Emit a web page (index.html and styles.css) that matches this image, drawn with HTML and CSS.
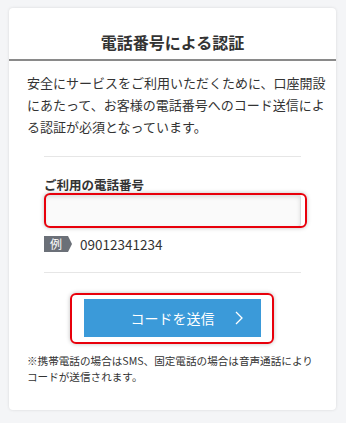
FILE: index.html
```html
<!DOCTYPE html>
<html lang="ja">
<head>
  <meta charset="utf-8">
  <meta name="viewport" content="width=device-width">
  <title>電話番号による認証</title>
  <link rel="stylesheet" href="styles.css">
</head>
<body>
 <div class="card">
  <div class="card-head">
   <h1 class="title">電話番号による認証</h1>
  </div>
  <div class="card-body">
   <p class="intro">安全にサービスをご利用いただくために、口座開設<br>にあたって、お客様の電話番号へのコード送信によ<br>る認証が必須となっています。</p>
   <div class="form">
    <label class="label" for="tel">ご利用の電話番号</label>
    <div class="field">
     <input class="input" id="tel" type="tel">
     <span class="mark mark-input"></span>
    </div>
    <div class="example">
     <span class="badge">例</span>
     <span class="example-num">09012341234</span>
    </div>
   </div>
   <div class="actions">
    <div class="btn-wrap">
     <button class="btn" type="button">コードを送信
      <svg class="chev" width="8" height="14" viewBox="0 0 8 14"><path d="M1 1 L7 7 L1 13" fill="none" stroke="#fff" stroke-width="1.3"/></svg>
     </button>
     <span class="mark mark-btn"></span>
    </div>
   </div>
   <p class="note">※携帯電話の場合はSMS、固定電話の場合は音声通話によりコードが送信されます。</p>
  </div>
 </div>
</body>
</html>
```
FILE: styles.css
```css
*,*:before,*:after{box-sizing:border-box;}
body{
 margin:0;
 padding:8px 10px 12px 9px;
 background:#f4f5f7;
 font-family:"Noto Sans CJK JP","Noto Sans",sans-serif;
 color:#333;
}
.card{
 width:327px;
 background:#fff;
 border-radius:4px;
 box-shadow:0 0 3px rgba(0,0,0,.12);
}
.card-head{
 padding:22px 0 5px;
 border-bottom:2px solid #8a8a8a;
}
.title{
 margin:0;
 font-size:16px;
 line-height:24px;
 font-weight:bold;
 text-align:center;
 color:#333;
}
.card-body{
 padding:11px 18px 25px;
}
.intro{
 margin:0 -12px 0 0;
 font-size:13px;
 line-height:22px;
 white-space:nowrap;
}
.form{
 margin:18px 17px 0;
 padding:20px 0 20px;
 border-top:1px solid #e6e6e6;
 border-bottom:1px solid #e6e6e6;
}
.label{
 display:block;
 font-size:12.5px;
 font-weight:bold;
 line-height:16px;
}
.field{
 position:relative;
 margin-top:1px;
}
.input{
 display:block;
 width:100%;
 height:33px;
 border:1px solid #dcdcdc;
 border-radius:3px;
 background:#fafafa;
 box-shadow:inset 0 2px 4px rgba(0,0,0,.12);
 outline:none;
}
.mark{
 position:absolute;
 border:2px solid #e8000b;
 border-radius:6px;
 box-shadow:0 0 4px rgba(0,0,0,.25);
 pointer-events:none;
}
.mark-input{
 left:0;
 top:-1px;
 width:263px;
 height:35px;
}
.example{
 display:flex;
 align-items:center;
 gap:9px;
 margin-top:9px;
 height:16px;
}
.badge{
 position:relative;
 width:24px;
 height:16px;
 background:#6b7078;
 color:#fff;
 font-size:12px;
 line-height:16px;
 text-align:center;
 margin-right:3px;
}
.badge:after{
 content:"";
 position:absolute;
 left:24px;
 top:0;
 border-top:8px solid transparent;
 border-bottom:8px solid transparent;
 border-left:4px solid #6b7078;
}
.example-num{
 font-size:13.5px;
 line-height:16px;
 color:#333;
}
.actions{
 display:flex;
 justify-content:center;
 margin-top:26px;
}
.btn-wrap{
 position:relative;
}
.btn{
 position:relative;
 display:block;
 width:177px;
 height:38px;
 border:0;
 background:#3b9ad9;
 color:#fff;
 font-family:inherit;
 font-size:14px;
 padding:0;
 cursor:pointer;
}
.chev{
 position:absolute;
 right:18px;
 top:12px;
}
.mark-btn{
 left:-14px;
 top:-6px;
 right:-13px;
 bottom:-7px;
}
.note{
 margin:16px 0 0;
 font-size:10.6px;
 line-height:16px;
}
```
